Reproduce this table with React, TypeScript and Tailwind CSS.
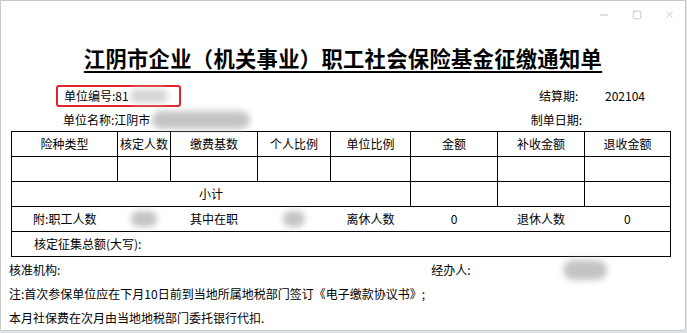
import { Minus, Square, X } from 'lucide-react';

const COLS = [106, 53, 87, 73, 80, 87, 87, 86];
const HEADERS = ['险种类型', '核定人数', '缴费基数', '个人比例', '单位比例', '金额', '补收金额', '退收金额'];

function Smudge({ className }: { className: string }) {
  // stands in for the blurred-out private values
  return <span className={`block rounded-full bg-[#c4c4c4] blur-[3px] ${className}`} />;
}

export default function App() {
  const cell = 'border border-black h-[25px] p-0 text-center align-middle';
  return (
    <div
      className="w-[687px] h-[333px] bg-[#dfe3e8] overflow-hidden text-black text-[12px]"
      style={{ fontFamily: '"Noto Sans CJK SC", "Liberation Sans", sans-serif' }}
    >
      <div className="w-[686px] h-[331px] bg-white border border-[#c9c9c9] rounded-br-[3px] flex flex-col">
        {/* window controls */}
        <div className="h-[28px] flex justify-end items-center gap-[22px] pr-[10px] text-[#a0a0a0]">
          <Minus size={12} strokeWidth={1.3} />
          <Square size={10} strokeWidth={1.3} />
          <X size={11} strokeWidth={1.2} />
        </div>

        <h1 className="mt-[17px] h-[28px] text-center text-[21.3px] leading-[26px] font-semibold tracking-[0.3px]">
          <span className="underline underline-offset-[4px] decoration-[1.5px]">
            江阴市企业（机关事业）职工社会保险基金征缴通知单
          </span>
        </h1>

        {/* header info */}
        <div className="mt-[12px] flex items-center h-[22px]">
          <div className="ml-[55px] w-[125px] h-[22px] border-2 border-[#e0242a] rounded-[3px] flex items-center pl-[6px]">
            <span>单位编号:81</span>
            <Smudge className="w-[38px] h-[14px] ml-[1px] bg-[#d6d6d6]" />
          </div>
          <span className="ml-auto w-[44px]">结算期:</span>
          <span className="ml-[22px] mr-[40px]">202104</span>
        </div>
        <div className="mt-[2px] flex items-center h-[22px]">
          <span className="ml-[62px]">单位名称:江阴市</span>
          <Smudge className="w-[98px] h-[18px] ml-[2px]" />
          <span className="ml-auto mr-[103px]">制单日期:</span>
        </div>

        {/* table */}
        <table className="mt-[1px] ml-[10px] border-collapse table-fixed w-[660px]">
          <colgroup>
            {COLS.map((w, i) => (
              <col key={i} style={{ width: w }} />
            ))}
          </colgroup>
          <tbody>
            <tr>
              {HEADERS.map((h) => (
                <td key={h} className={cell}>{h}</td>
              ))}
            </tr>
            <tr>
              {HEADERS.map((h) => (
                <td key={h} className={cell} />
              ))}
            </tr>
            <tr>
              <td colSpan={5} className={cell}>小计</td>
              <td className={cell} />
              <td className={cell} />
              <td className={cell} />
            </tr>
            <tr>
              <td className={`${cell} border-r-0`}>附:职工人数</td>
              <td className={`${cell} border-x-0`}>
                <Smudge className="mx-auto w-[26px] h-[16px]" />
              </td>
              <td className={`${cell} border-x-0`}>其中在职</td>
              <td className={`${cell} border-x-0`}>
                <Smudge className="mx-auto w-[22px] h-[16px]" />
              </td>
              <td className={`${cell} border-x-0`}>离休人数</td>
              <td className={`${cell} border-x-0`}>0</td>
              <td className={`${cell} border-x-0`}>退休人数</td>
              <td className={`${cell} border-l-0`}>0</td>
            </tr>
            <tr>
              <td colSpan={8} className={`${cell} text-left pl-[22px]`}>核定征集总额(大写):</td>
            </tr>
          </tbody>
        </table>

        {/* footer */}
        <div className="mt-[1px] h-[24px] flex items-center">
          <span className="ml-[8px]">核准机构:</span>
          <span className="ml-[371px]">经办人:</span>
          <Smudge className="ml-[92px] w-[44px] h-[20px]" />
        </div>
        <div className="h-[25px] flex items-center pl-[8px]">
          注:首次参保单位应在下月10日前到当地所属地税部门签订《电子缴款协议书》;
        </div>
        <div className="h-[24px] flex items-center pl-[8px]">本月社保费在次月由当地地税部门委托银行代扣.</div>
      </div>
    </div>
  );
}
